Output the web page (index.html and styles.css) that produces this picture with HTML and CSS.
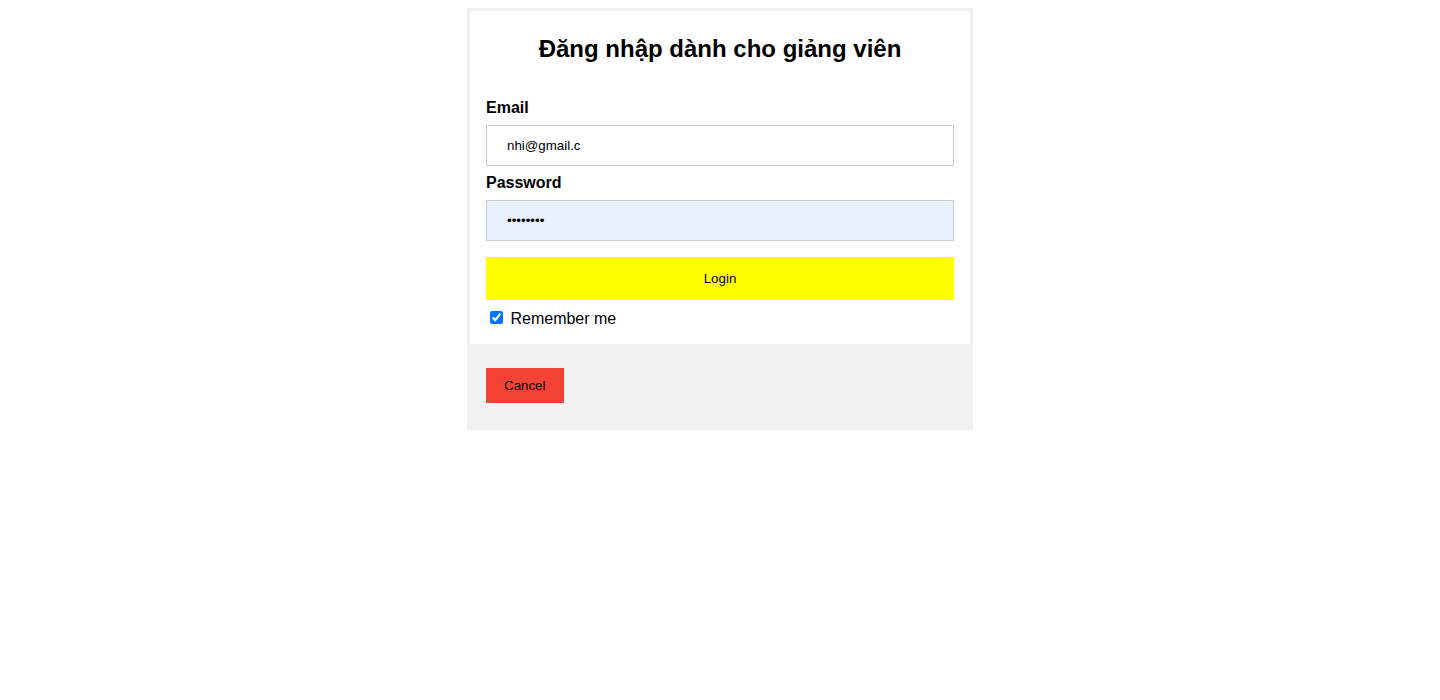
FILE: index.html
```html
<!DOCTYPE html>
<html lang="vi">
<head>
<meta charset="utf-8">
<title>Đăng nhập</title>
<link rel="stylesheet" href="styles.css">
</head>
<body>
<form class="login-form">
  <div class="title-box">
    <h2 class="title">Đăng nhập dành cho giảng viên</h2>
  </div>
  <div class="section">
    <label class="field-label" for="email">Email</label>
    <input class="field" type="text" id="email" value="nhi@gmail.c">
    <label class="field-label" for="pw">Password</label>
    <input class="field field-autofill" type="password" id="pw" value="12345678">
    <button class="btn btn-login" type="button">Login</button>
    <label class="remember"><input class="remember-box" type="checkbox" checked> Remember me</label>
  </div>
  <div class="section section-grey">
    <button class="btn btn-cancel" type="button">Cancel</button>
  </div>
</form>
</body>
</html>
```
FILE: styles.css
```css
body {
  margin: 8px;
  font-family: "Liberation Sans", Arial, sans-serif;
  background: #fff;
  color: #000;
}
.login-form {
  width: 500px;
  margin: 0 auto;
  border: 3px solid #f1f1f1;
}
.title-box {
  text-align: center;
  margin: 24px 0 12px 0;
}
.title {
  font-size: 24px;
  font-weight: bold;
  margin: 0.83em 0;
}
.section {
  padding: 16px;
}
.section-grey {
  background: #f1f1f1;
}
.field-label {
  font-weight: bold;
  font-size: 16px;
}
.field {
  width: 100%;
  padding: 12px 20px;
  margin: 8px 0;
  display: inline-block;
  border: 1px solid #ccc;
  box-sizing: border-box;
  font-family: "Liberation Sans", Arial, sans-serif;
  font-size: 13.3333px;
  color: #000;
  background: #fff;
}
.field-autofill {
  background-color: #e8f0fe;
}
.btn {
  font-family: "Liberation Sans", Arial, sans-serif;
  font-size: 13.3333px;
  color: #000;
  border: none;
  cursor: pointer;
  margin: 8px 0;
}
.btn-login {
  background-color: #ffff00;
  padding: 14px 20px;
  width: 100%;
}
.btn-cancel {
  background-color: #f44336;
  padding: 10px 18px;
  width: auto;
}
.remember {
  font-size: 16px;
}
.remember-box {
  margin: 3px 3px 3px 4px;
}
```
